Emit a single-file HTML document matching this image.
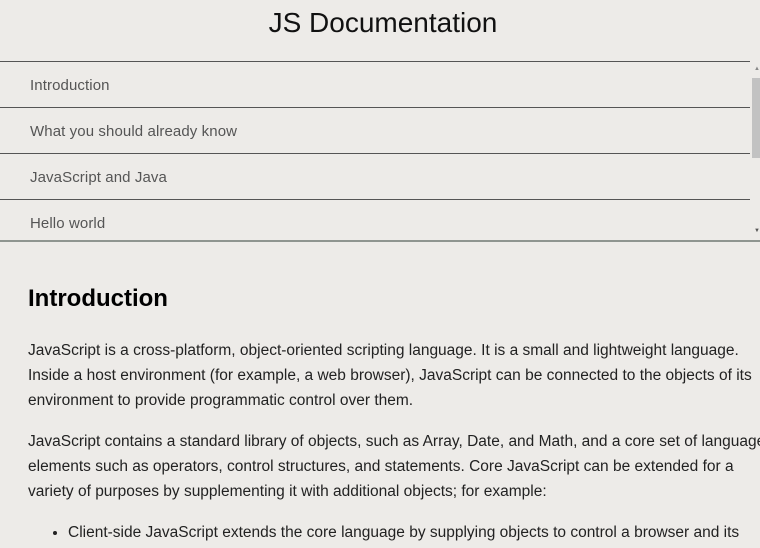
<!DOCTYPE html>
<html><head><style>
html,body{margin:0;padding:0;}
body{width:760px;height:548px;overflow:hidden;background:#edebe8;font-family:"Liberation Sans",sans-serif;position:relative;}
h1{margin:0;position:absolute;top:7px;left:0;width:766px;text-align:center;font-weight:normal;font-size:28px;color:#111;}
.nav{position:absolute;top:61px;left:0;width:760px;height:180px;overflow:hidden;}
.nav div{position:absolute;left:0;width:750px;height:45px;border-top:1px solid #555;}
.nav span{position:absolute;left:30px;top:15px;font-size:15px;letter-spacing:0.1px;color:#555;}
.thumb{position:absolute;left:752px;top:78px;width:8px;height:80px;background:#c2c2c2;}
.bot{position:absolute;top:240px;left:0;width:760px;height:2px;background:#8f9590;}
.main{position:absolute;top:284px;left:28px;width:740px;font-size:15.5px;color:#222;line-height:25px;white-space:nowrap;}
h2{margin:0 0 25px;font-size:24px;line-height:29px;color:#000;}
p{margin:0 0 16px;}
ul{margin:0;padding-left:40px;}
</style></head><body>
<h1>JS Documentation</h1>
<div class="nav">
<div style="top:0"><span>Introduction</span></div>
<div style="top:46px"><span>What you should already know</span></div>
<div style="top:92px"><span>JavaScript and Java</span></div>
<div style="top:138px"><span>Hello world</span></div>
</div>
<div class="thumb"></div>
<div style="position:absolute;left:754px;top:66px;font-size:6px;color:#888">▲</div>
<div style="position:absolute;left:754px;top:228px;font-size:6px;color:#555">▼</div>
<div class="bot"></div>
<div class="main">
<h2>Introduction</h2>
<p>JavaScript is a cross-platform, object-oriented scripting language. It is a small and lightweight language.<br>Inside a host environment (for example, a web browser), JavaScript can be connected to the objects of its<br>environment to provide programmatic control over them.</p>
<p>JavaScript contains a standard library of objects, such as Array, Date, and Math, and a core set of language<br>elements such as operators, control structures, and statements. Core JavaScript can be extended for a<br>variety of purposes by supplementing it with additional objects; for example:</p>
<ul><li>Client-side JavaScript extends the core language by supplying objects to control a browser and its</li></ul>
</div>
</body></html>
